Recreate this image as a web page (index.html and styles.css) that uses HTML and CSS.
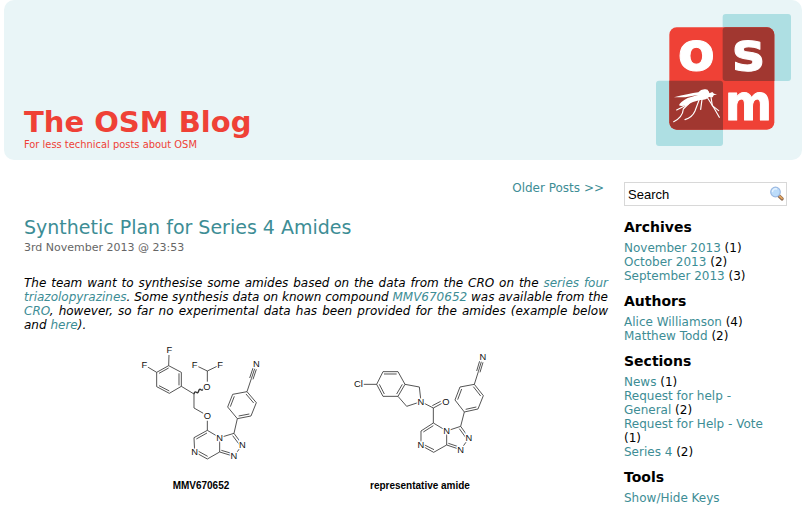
FILE: index.html
```html
<!DOCTYPE html>
<html lang="en">
<head>
<meta charset="utf-8">
<title>The OSM Blog</title>
<link rel="stylesheet" href="styles.css">
</head>
<body>
<header class="banner">
  <div class="banner-text">
    <h1>The OSM Blog</h1>
    <p>For less technical posts about OSM</p>
  </div>
  <svg class="logo" viewBox="48 42 405 396" role="img" aria-label="OSM logo">
    <rect x="248" y="42" width="205" height="201" rx="9" fill="#aedfe3"/>
    <rect x="48" y="242" width="201" height="196" rx="9" fill="#aedfe3"/>
    <rect x="88" y="82" width="315" height="307" rx="22" fill="#ef4136"/>
    <path d="M257 82H381a22 22 0 0 1 22 22V243H257a9 9 0 0 1-9-9V91a9 9 0 0 1 9-9Z" fill="#a13730"/>
    <path d="M88 242H240a9 9 0 0 1 9 9V389H110a22 22 0 0 1-22-22Z" fill="#a13730"/>
    <g class="logo-letters">
      <text x="169" y="209">o</text>
      <text x="325" y="209">s</text>
      <text class="logo-m" x="325" y="359">m</text>
    </g>
    <g fill="#fff">
      <path d="M102 292Q145 281 175 277Q184 266 197 268Q208 272 208 280L217 276L222 281L231 283L221 286L218 292L207 291Q198 301 180 300Q158 304 140 315Q124 321 117 316Q119 307 143 294L176 284L136 292Z"/>
      <g fill="none" stroke="#fff" stroke-width="3.5" stroke-linecap="round" stroke-linejoin="round">
        <path d="M151 306L130 327Q128 352 101 365"/>
        <path d="M145 312L110 330"/>
        <path d="M178 298L165 333Q157 352 135 359"/>
        <path d="M186 298L182 328"/>
        <path d="M201 291L222 324L238 352"/>
        <path d="M213 291L217 317L236 332"/>
        <path d="M201 270L205 283"/>
      </g>
    </g>
  </svg>
</header>

<div class="page">
  <main>
    <nav class="pager"><a href="#">Older Posts &gt;&gt;</a></nav>
    <article>
      <h2><a href="#">Synthetic Plan for Series 4 Amides</a></h2>
      <p class="date">3rd November 2013 @ 23:53</p>
      <p class="intro">The team want to synthesise some amides based on the data from the CRO on the <a href="#">series four triazolopyrazines</a>. Some synthesis data on known compound <a href="#">MMV670652</a> was available from the <a href="#">CRO</a>, however, so far no experimental data has been provided for the amides (example below and&nbsp;<a href="#">here</a>).</p>
      <svg class="structures" viewBox="24 332 580 168" role="img" aria-label="Chemical structures of MMV670652 and a representative amide">
        <g transform="translate(120 335) scale(.33333)">
          <g class="bonds">
            <path d="M146 92L184 112V154L148 175L110 155V112ZM146 92L147 60M110 112L83 96M117 115L146 99M177 115V151M117 152L148 168"/>
            <path d="M184 154L222 177V219L250 235M262 140V108M262 108L233 94M262 108L291 94M262 257V286"/>
            <path stroke-width="4" d="M222 177q2-9 7-5t7-4t7-4t8-4"/>
            <path d="M262 286L222 308L224 351L262 372L299 351V308ZM261 294L229 312M232 347L263 364"/>
            <path d="M299 308L342 295L367 329L342 364L299 351M338 302L359 330M338 356L304 346"/>
            <path d="M342 295L352 251L323 216L338 178L381 170L409 203L393 243L352 251M331 215L343 184M378 177L401 204M388 237L356 243"/>
            <path d="M381 170L394 131L404 101M389 129L399 99M399 133L409 103"/>
          </g>
          <g class="atoms">
            <text x="148" y="55">F</text><text x="73" y="99">F</text>
            <text x="224" y="99">F</text><text x="300" y="99">F</text>
            <text x="261" y="164">O</text><text x="262" y="252">O</text>
            <text x="409" y="97">N</text><text x="299" y="317">N</text>
            <text x="367" y="338">N</text><text x="342" y="373">N</text>
            <text x="224" y="360">N</text>
          </g>
          <text class="caption" x="243" y="463">MMV670652</text>
        </g>
        <g transform="translate(340 335) scale(.33333)">
          <g class="bonds">
            <path d="M70 148H110L129 110H174L195 148L174 184H129L110 148M132 117H170M187 148L170 177M118 148L133 177"/>
            <path d="M195 148L238 156L243 200L200 214L174 184M243 200L280 219L306 205M277 212L302 199M280 219V264"/>
            <path d="M280 264L243 288V331L281 352L320 330V288ZM280 272L250 291M250 328L282 344"/>
            <path d="M320 288L362 274L387 309L362 344L320 330M358 281L379 310M358 336L325 325"/>
            <path d="M362 274L373 231L345 195L360 156L403 148L430 182L414 222L373 231M353 194L365 162M400 155L422 183M409 216L377 223"/>
            <path d="M403 148L415 110L424 80M410 108L419 78M420 112L429 82"/>
          </g>
          <g class="atoms">
            <text x="55" y="157">Cl</text><text x="243" y="209">N</text>
            <text x="318" y="209">O</text><text x="429" y="75">N</text>
            <text x="320" y="297">N</text><text x="387" y="318">N</text>
            <text x="362" y="353">N</text><text x="243" y="340">N</text>
          </g>
          <text class="caption" x="240" y="463">representative amide</text>
        </g>
      </svg>
    </article>
  </main>

  <aside>
    <form class="search">
      <input type="text" value="Search" aria-label="Search the blog">
      <button type="button" aria-label="Search">
        <svg viewBox="0 0 16 16" width="16" height="16" aria-hidden="true">
          <path d="M9.5 9.5L13 12.8" stroke="#8a6a52" stroke-width="3.5" stroke-linecap="round"/>
          <path d="M10.8 10.3L13 12.3" stroke="#e5a55e" stroke-width="1.8" stroke-linecap="round"/>
          <circle cx="6.5" cy="6" r="4.8" fill="#bcdcfa" stroke="#9bb9e2" stroke-width="1.2"/>
          <path d="M3.5 5.5A3 3 0 0 1 7.5 3" fill="none" stroke="#e8f4ff" stroke-width="1.4" stroke-linecap="round"/>
        </svg>
      </button>
    </form>
    <section>
      <h3>Archives</h3>
      <ul>
        <li><a href="#">November 2013</a> (1)</li>
        <li><a href="#">October 2013</a> (2)</li>
        <li><a href="#">September 2013</a> (3)</li>
      </ul>
    </section>
    <section>
      <h3>Authors</h3>
      <ul>
        <li><a href="#">Alice Williamson</a> (4)</li>
        <li><a href="#">Matthew Todd</a> (2)</li>
      </ul>
    </section>
    <section>
      <h3>Sections</h3>
      <ul>
        <li><a href="#">News</a> (1)</li>
        <li><a href="#">Request for help - General</a> (2)</li>
        <li><a href="#">Request for Help - Vote</a> (1)</li>
        <li><a href="#">Series 4</a> (2)</li>
      </ul>
    </section>
    <section>
      <h3>Tools</h3>
      <ul>
        <li><a href="#">Show/Hide Keys</a></li>
      </ul>
    </section>
  </aside>
</div>
</body>
</html>
```
FILE: styles.css
```css
* {
  box-sizing: border-box;
}

body {
  margin: 0 0 0 4px;
  background: #fff;
  color: #000;
  font: 12px/14px "DejaVu Sans", sans-serif;
}

h1, h2, h3, p, ul {
  margin: 0;
  padding: 0;
}

a {
  color: #3d8d95;
  text-decoration: none;
}

.banner {
  display: flex;
  justify-content: space-between;
  align-items: flex-end;
  padding: 14px 11px 8px 20px;
  background: #e9f5f7;
  border-radius: 10px;
  color: #ef4136;
}

.banner h1 {
  font-size: 29px;
  line-height: 32px;
}

.banner p {
  font-family: "DejaVu Sans Condensed", "DejaVu Sans", sans-serif;
  font-size: 11px;
}

.logo {
  width: 135px;
  height: 132px;
  margin-bottom: 6px;
}

.logo-letters {
  font: bold 162px "DejaVu Sans", sans-serif;
  fill: #fff;
  stroke: #fff;
  stroke-width: 3px;
  stroke-linejoin: round;
  text-anchor: middle;
}

.logo-m {
  font: bold 150px "DejaVu Sans Condensed", "DejaVu Sans", sans-serif;
}

.page {
  display: grid;
  grid-template-columns: 1fr 163px;
  gap: 20px;
  padding: 21px 15px 0 20px;
}

.pager {
  text-align: right;
}

h2 {
  margin-top: 20px;
  font-size: 19px;
  font-weight: normal;
  line-height: 24px;
}

.date {
  margin-top: 2px;
  color: #666;
  font-size: 11px;
}

.intro {
  margin: 21px -4px 0 0;
  font-style: italic;
  text-align: justify;
}

.structures {
  display: block;
  width: 100%;
}

.bonds {
  fill: none;
  stroke: #333;
  stroke-width: 2.5px;
  stroke-linejoin: round;
}

.atoms {
  font: 28px "Liberation Sans", sans-serif;
  fill: #111;
  stroke: #fff;
  stroke-width: 8px;
  paint-order: stroke;
  text-anchor: middle;
}

.caption {
  font: bold 30px "Liberation Sans", sans-serif;
  text-anchor: middle;
}

.search {
  display: flex;
  align-items: center;
  height: 24px;
  margin: 1px 0 3px;
  border: 1px solid #d8d8d8;
}

.search input {
  flex: 1;
  min-width: 0;
  padding: 0 3px;
  border: 0;
  outline: 0;
  background: none;
  color: #000;
  font: 13px "Liberation Sans", sans-serif;
}

.search button {
  display: flex;
  padding: 0 1px 0 0;
  border: 0;
  background: none;
}

aside section {
  padding-top: 10px;
}

h3 {
  margin-bottom: 5px;
  font-size: 14px;
  line-height: 17px;
}

aside ul {
  padding-right: 15px;
  list-style: none;
}
```
